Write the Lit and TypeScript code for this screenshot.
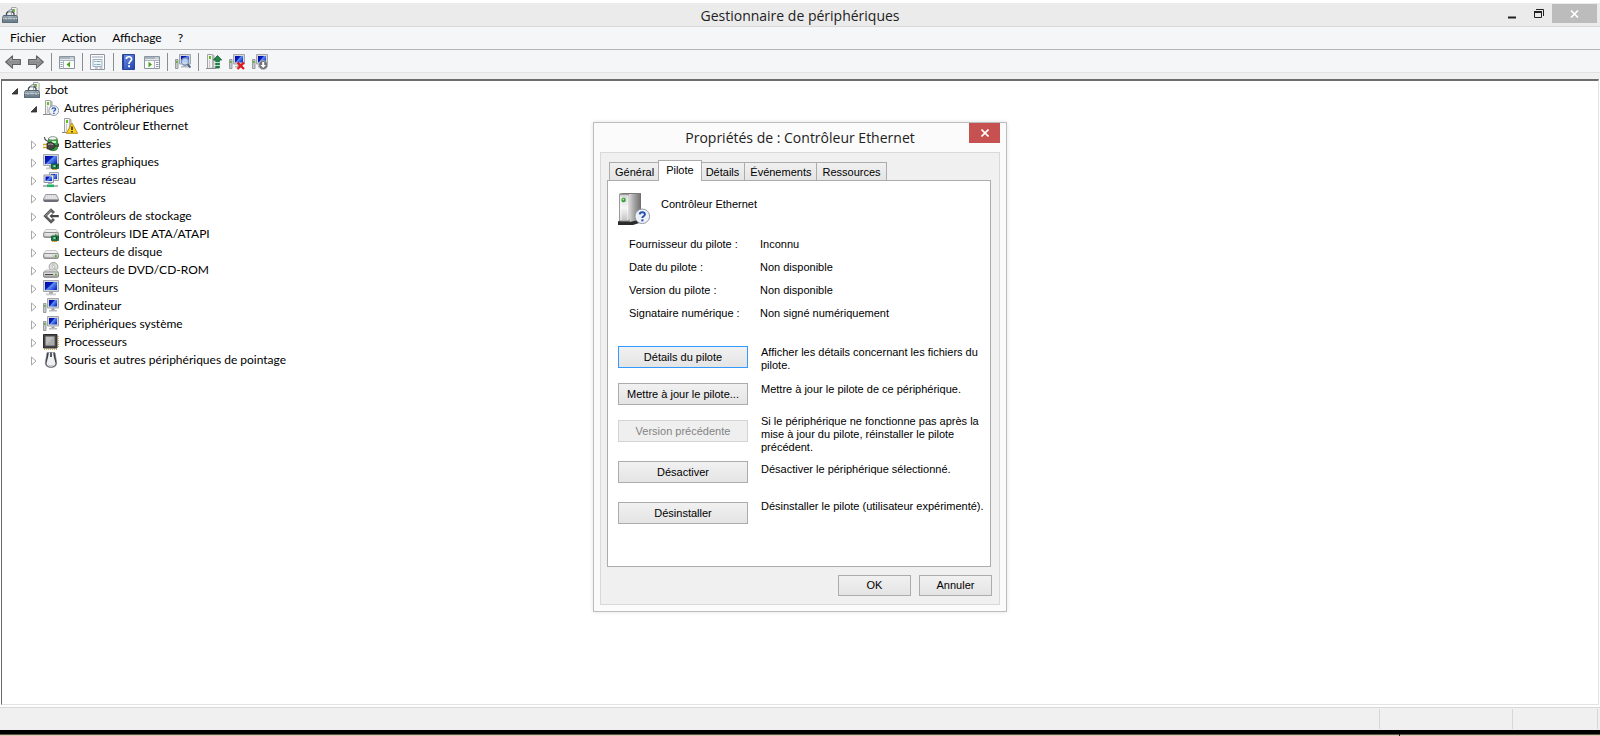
import { LitElement, html, svg, css, nothing, SVGTemplateResult } from "lit";
import { customElement, state } from "lit/decorators.js";
import { classMap } from "lit/directives/class-map.js";

/* ---------- reusable pieces of artwork, on a 16 x 16 grid ---------- */

const gradients = svg`<defs>
  <linearGradient id="screen" x1="0" y1="0" x2="1" y2=".7">
    <stop offset="0" stop-color="#0208a0"/><stop offset=".45" stop-color="#0a1cc0"/>
    <stop offset=".55" stop-color="#5f8ff0"/><stop offset="1" stop-color="#1434d0"/>
  </linearGradient>
  <linearGradient id="metal" x1="0" y1="0" x2="0" y2="1">
    <stop offset="0" stop-color="#f4f4f4"/><stop offset="1" stop-color="#9c9c9c"/>
  </linearGradient>
  <linearGradient id="arrow" x1="0" y1="0" x2="0" y2="1">
    <stop offset="0" stop-color="#c4c4c4"/><stop offset=".5" stop-color="#8b8b8b"/><stop offset="1" stop-color="#a8a8a8"/>
  </linearGradient>
  <linearGradient id="case" x1="0" y1="0" x2="0" y2="1">
    <stop offset="0" stop-color="#a9b8c2"/><stop offset="1" stop-color="#5f7482"/>
  </linearGradient>
  <linearGradient id="help" x1="0" y1="0" x2="1" y2="1">
    <stop offset="0" stop-color="#6f95e8"/><stop offset="1" stop-color="#1f3fae"/>
  </linearGradient>
  <linearGradient id="steel" x1="0" y1="0" x2="1" y2="0">
    <stop offset="0" stop-color="#d9d9d9"/><stop offset=".4" stop-color="#a8a8a8"/><stop offset="1" stop-color="#6e6e6e"/>
  </linearGradient>
  <linearGradient id="face" x1="0" y1="0" x2="0" y2="1">
    <stop offset="0" stop-color="#d0d0d0"/><stop offset=".5" stop-color="#f6f6f6"/><stop offset="1" stop-color="#c2c2c2"/>
  </linearGradient>
</defs>`;

const question = (cx: number, cy: number, r: number) => svg`
  <circle cx=${cx} cy=${cy} r=${r} fill="#eef2f7" stroke="#8a929e" stroke-width=".9"/>
  <g transform="translate(${cx} ${cy}) scale(${r / 4.5})">
    <path d="M-1.600 -1.200C-1.500 -3 1.700 -3 1.600 -1.100C1.500 0 0 0 0 1.100" fill="none" stroke="#2450b4" stroke-width="1.200"/>
    <rect x="-.6" y="1.900" width="1.300" height="1.200" fill="#2450b4"/>
  </g>`;

const tower = svg`
  <path d="M2.500 .5h5l1 .8v13h-6z" fill="#f2f2f2" stroke="#a3a3a3"/>
  <path d="M7 .6l2.600 .9v12.800H7z" fill="#b5b5b5"/>
  <rect x="4" y="2" width="2" height="3" fill="#62c024"/>
  <path d="M4.500 6v7" stroke="#c8c8c8"/>
  <path d="M0 14.500h11" stroke="#8b8b8b"/>`;

const toolbox = svg`
  <path d="M9.500 .5h4.700l.9 1v9h-5.600z" fill="#f3f3f3" stroke="#a5a5a5"/>
  <rect x="11" y="2" width="2" height="3" fill="#74c63a"/>
  <path d="M4.500 8V6.200L6 4.700h4.400L12 6.200V8" fill="none" stroke="#3f4a52" stroke-width="1.300"/>
  <path d="M5.500 4.500L8.500 2.500h3l-2 2.200" fill="#cfd6da" stroke="#59666f" stroke-width=".6"/>
  <path d="M1.500 8.500h13l1 2.200v5H.5v-5z" fill="url(#case)" stroke="#526571"/>
  <path d="M.6 11.500h14.800" stroke="#c3d0d8" stroke-width=".9"/>
  <path d="M3 10h2v3H3zM11 10h2v3h-2z" fill="#e3e9ec" stroke="#43535e" stroke-width=".5"/>`;

const monitor = svg`
  <path d="M.5 .5h15v11H.5z" fill="#d3d6da" stroke="#a4a8ae"/>
  <path d="M2 2h12v8H2z" fill="url(#screen)"/>
  <path d="M6 12h4v2H6z" fill="#a5a7aa"/><path d="M3 13.500h10v1.800H3z" fill="#c8cacc"/>`;

const pc = svg`
  <path d="M.5 5.500h2.500v9H.5z" fill="#c7cacd" stroke="#888c90" stroke-width=".8"/>
  <rect x="1" y="7" width="1.500" height="2" fill="#57b82a"/>
  <path d="M4.500 .5h11v9.500h-11z" fill="#d5d7da" stroke="#a2a6ab"/>
  <path d="M6 2h8v6.500H6z" fill="url(#screen)"/>
  <path d="M8.500 10.500h3V12h-3z" fill="#999"/><path d="M6 12h8v1.500H6z" fill="#b9bbbd"/>`;

const chipCard = svg`
  <path d="M8.500 10h7v4.500h-7z" fill="#1f7a4a" stroke="#0f4f2e" stroke-width=".8"/>
  <path d="M10.500 11.200h2v1.800h-2z" fill="#8fe0b0"/><path d="M13.500 11v2.500" stroke="#0b3c22"/>
  <path d="M9 15.500h5" stroke="#d9a437"/>`;

const disk = svg`
  <path d="M3 6.500h10L15.500 10H.5z" fill="#f1f1f1" stroke="#b1b1b1" stroke-width=".7"/>
  <rect x=".5" y="9.500" width="15" height="5" rx="1.600" fill="url(#metal)" stroke="#868686" stroke-width=".9"/>
  <path d="M2.500 12h7" stroke="#f6f6f6"/><rect x="12" y="10.800" width="1.600" height="2.400" fill="#4fb32a"/>`;

const consolePane = svg`
  <path d="M.5 2.500h15v12H.5z" fill="#fdfdfd" stroke="#8b95a0"/>
  <path d="M1 3h14v2.300H1z" fill="#a9b4be"/><path d="M11 4h3.500" stroke="#e7ecf0"/>
  <path d="M1 6.500h14" stroke="#a9b4be"/>`;

const icons: Record<string, SVGTemplateResult> = {
  toolbox,
  back: svg`<path d="M.7 8L7.500 1.800v3.700h7.900v5H7.500v3.700z" fill="url(#arrow)" stroke="#626262" stroke-width="1.100" stroke-linejoin="round"/>`,
  forward: svg`<path d="M15.300 8L8.500 1.800v3.700H.6v5h7.900v3.700z" fill="url(#arrow)" stroke="#626262" stroke-width="1.100" stroke-linejoin="round"/>`,
  treePane: svg`${consolePane}<path d="M4.500 7v7.500" stroke="#a9b4be"/><path d="M1.500 8.500h2M1.500 10.500h2M1.500 12.500h2" stroke="#8b95a0"/>
    <path d="M11 7.500v6L7.500 10.500z" fill="#4aa51c"/>`,
  actionPane: svg`${consolePane}<path d="M10.500 7v7.500" stroke="#a9b4be"/><path d="M12 8.500h2.500M12 10.500h2.500M12 12.500h2.500" stroke="#8b95a0"/>
    <path d="M4.500 7.500v6L8 10.500z" fill="#4aa51c"/>`,
  properties: svg`<path d="M.5 .5h14v15H.5z" fill="#fcfcfc" stroke="#8f98a2"/><path d="M2 2h11v2H2z" fill="#c9d0d7"/>
    <path d="M3 5.500h9v7H3z" fill="#eef5fa" stroke="#a3b0bb"/>
    <path d="M4.500 7.500h1M4.500 10.500h1" stroke="#2c86c0"/><path d="M6.500 7.500h4M6.500 10.500h4" stroke="#7fa6bf"/>
    <path d="M5 14h3M9.500 14h3" stroke="#8f98a2"/>`,
  help: svg`<path d="M1.500 .5h12v15h-12z" fill="url(#help)" stroke="#2a479c"/><path d="M2.500 1v14" stroke="#274296"/>
    <path d="M5.300 5C5.500 2 10.700 2 10.600 5.200C10.500 7.300 8 7.300 8 10" fill="none" stroke="#fff" stroke-width="1.700"/><path d="M7.100 11.300h1.900v1.900H7.100z" fill="#fff"/>`,
  scan: svg`${pc}<circle cx="10" cy="7.500" r="3.600" fill="#cfe4fb" fill-opacity=".8" stroke="#7590b8" stroke-width="1.100"/><path d="M12.600 10.200l2.800 3.400" stroke="#4d6288" stroke-width="2"/>`,
  update: svg`<g transform="translate(-1 0)">${tower}</g><path d="M11.500 1.500l4.200 4.500h-2.400v8H9.800V6H7.300z" fill="#1f8a4c" stroke="#0f5a30" stroke-width=".8"/><path d="M8 8.500h7M8 11.500h7" stroke="#e7f7ec" stroke-width=".8"/>`,
  uninstall: svg`${pc}<path d="M8.500 8.500l6.500 6.500M15 8.500L8.500 15" stroke="#e0161b" stroke-width="2.200"/>`,
  disable: svg`${pc}<circle cx="11.200" cy="11" r="4.500" fill="#6f7276" stroke="#b9bcbf" stroke-width=".8"/><path d="M10.200 8h2v3h1.800l-2.800 3-2.800-3h1.800z" fill="#fff"/>`,
  unknown: svg`${tower}${question(10.800, 10.600, 4.900)}`,
  warning: svg`${tower}<path d="M10 5l5.600 10.300H4.400z" fill="#fbd21b" stroke="#b78a06" stroke-width=".9" stroke-linejoin="round"/><path d="M10 8.500v3.500M10 13v1.500" stroke="#222" stroke-width="1.500"/>`,
  battery: svg`<path d="M5.500 2.500C6 .5 13.500 .5 14 2.500l.5 2v7.500c0 3.500-9 3.500-9 0z" fill="#35a43c" stroke="#1d6d26" stroke-width=".7"/>
    <ellipse cx="9.700" cy="2.300" rx="4" ry="1.600" fill="#f3f3f3" stroke="#8a8a8a" stroke-width=".6"/><path d="M9 5h4v2H9z" fill="#c9f3c4"/>
    <path d="M1.500 1c0 4 2 3 3.500 4.500" fill="none" stroke="#444" stroke-width="1.100"/>
    <path d="M0 8.500h4M0 11.500h4" stroke="#d9a520" stroke-width="1.300"/>
    <path d="M4 7c5-1.500 8 .5 8 3s-3 4.500-8 2.800z" fill="#474747" stroke="#202020" stroke-width=".7"/><path d="M5 8.500c2-.8 4-.6 5 .4" stroke="#aaa" fill="none"/>
    <path d="M12 10.200h3.300V7.500" stroke="#333" fill="none" stroke-width="1.200"/>`,
  display: svg`${monitor}${chipCard}`,
  network: svg`<path d="M6.500 .5h9v8h-9z" fill="#dfe3ea" stroke="#9ea5b0"/><path d="M8 2h6v5H8z" fill="url(#screen)"/>
    <path d="M1 3h9.500v7.500H1z" fill="#e4e7ec" stroke="#8d96a4"/><path d="M2.500 4.500h6.500V9H2.500z" fill="url(#screen)"/>
    <path d="M5 10.800h4V12H5z" fill="#a9adb3"/><path d="M0 14h15" stroke="#9aa5a0" stroke-width="1.600"/><path d="M4 12.500h7v2.600H4z" fill="#1fb563"/>`,
  keyboard: svg`<path d="M2.800 4.500h10.400l2.300 4.300v2H.5v-2z" fill="#d5d5d9" stroke="#84858c" stroke-width=".8" stroke-linejoin="round"/>
    <path d="M.8 9.400h14.400v1.900l-1 .6H1.800l-1-.6z" fill="#6c6d76"/><path d="M3.200 6h9.800M2.600 8h11" stroke="#fff" stroke-dasharray="1 1"/>`,
  storage: svg`<path d="M12 4L8 .3 .3 8 8 15.700 12 12l-2-2-2 2-4-4 4-4 2 2z" fill="#5c5c5c"/>
    <path d="M8 2.200L2.200 8" stroke="#a2a2a2" stroke-width=".8"/>
    <path d="M6.500 8l3-2.600V7h6.300v2.200H9.500v1.500z" fill="#454545"/>`,
  ide: svg`<g transform="translate(0 -3)">${disk}</g>${chipCard}`,
  disk,
  optical: svg`<circle cx="10.500" cy="4.800" r="4.400" fill="#dedede" stroke="#909090" stroke-width=".8"/><path d="M10.500 4.800L8 1.300l4-.6zM10.500 4.800l3.700 2.500-3 1.700z" fill="#b5d6b0"/><circle cx="10.500" cy="4.800" r="1.300" fill="#fff" stroke="#999" stroke-width=".6"/>
    <path d="M3 8h10l2.500 2.200H.5z" fill="#efefef" stroke="#a4a4a4" stroke-width=".7"/>
    <rect x=".5" y="10" width="15" height="5.300" rx="1.200" fill="url(#metal)" stroke="#7d7d7d" stroke-width=".9"/><path d="M2 12.500h8" stroke="#474747"/><rect x="12" y="11.600" width="1.800" height="1.800" fill="#4fb32a"/>`,
  monitor,
  pc,
  cpu: svg`<path d="M.5 .5h13.500v13.500H.5z" fill="#454545" stroke="#2c2c2c"/><path d="M2.500 2.500h9v9h-9z" fill="#bdbdbd"/><path d="M2.500 11.500h9v-9z" fill="#9a9a9a" opacity=".5"/>
    <path d="M15.300 2v12" stroke="#c99b2c" stroke-dasharray="1 1"/><path d="M1 15.300h14" stroke="#c99b2c" stroke-dasharray="1 1"/>`,
  mouse: svg`<path d="M4 .7C5.500 0 10.500 0 12 .7l1.700 10c.5 6.500-11.900 6.500-11.400 0z" fill="#3a3e46" stroke="#7b7f86" stroke-width=".6"/>
    <path d="M5.800 .5h4.400C10.500 5 11.800 8 12.500 11c.5 5-9.500 5-9 0C4.200 8 5.500 5 5.800 .5z" fill="#f0f0f0"/>
    <path d="M7 .5h2v4.500H7z" fill="#555b64"/><path d="M5.500 13c1.500 1.200 3.500 1.200 5 0" fill="none" stroke="#b9bcc2"/>`,
};

@customElement("app-root")
export class AppRoot extends LitElement {
  @state() private closed = new Set<string>();
  @state() private tab = "Pilote";

  static styles = css`
    :host {
      display: block;
      --ui: Lato, "Open Sans", sans-serif;
      --title: "Open Sans", "Noto Sans", sans-serif;
      --dlg: "Liberation Sans", Arial, sans-serif;
      color: #000;
      font: 12px/18px var(--ui);
    }
    button { font: inherit; color: inherit; margin: 0; padding: 0; border: 0; background: none; }
    ul, dl, dd, h1, h2, p { margin: 0; padding: 0; list-style: none; font-weight: normal; }
    svg { display: block; flex: none; }
    .defs { position: absolute; width: 0; height: 0; }

    .desktop { position: relative; display: flex; flex-direction: column; height: 100vh; overflow: hidden; background: #000; }
    .window { flex: 1; display: flex; flex-direction: column; min-height: 0; padding-top: 3px; background: #fff; }
    .titlebar { display: grid; grid-template-columns: 1fr auto 1fr; height: 23px; background: #ebebeb; border-bottom: 1px solid #dadada; }
    .titlebar .mark { padding: 4px 0 0 2px; }
    .titlebar h1, .dialog h2 { font: 14px/20px var(--title); color: #222; }
    .titlebar h1 { padding-top: 3px; }
    .controls { display: flex; justify-content: flex-end; align-items: flex-start; padding-right: 3px; }
    .controls button { width: 27px; height: 20px; display: grid; place-items: center; margin-top: 1px; }
    .controls .shut { width: 45px; height: 19px; background: #bcbcbc; }
    .menubar { display: flex; gap: 16px; height: 22px; padding: 0 10px; background: #f5f6f7; border-bottom: 1px solid #b2b4b6; }
    .menubar button { line-height: 22px; }
    .toolbar { display: flex; align-items: flex-end; height: 22px; padding-left: 1px; background: #f5f6f7; border-bottom: 1px solid #e2e2e2; }
    .toolbar button { width: 23px; height: 20px; display: grid; place-items: center; }
    .toolbar i { width: 1px; height: 18px; margin: 0 3px 1px 4px; background: #8d8d8d; }
    .client { flex: 1; min-height: 0; padding: 6px 1px 2px 1px; background: linear-gradient(#f0f0f0 0 6px, #fff 6px); }
    .tree { height: 100%; box-sizing: border-box; background: #fff; border: 1px solid #e3e3e3; border-top: 2px solid #6f6b6f; border-left: 1px solid #696969; }
    .row { display: flex; align-items: center; height: 18px; }
    .row svg { margin-right: 5px; }
    .twisty { width: 16px; height: 18px; padding-top: 2px; display: grid; place-items: center; margin-right: 1px; }
    .row .twisty svg { margin: 0; }
    .tree > li > .row { padding-left: 5px; }
    .tree > li > ul > li > .row { padding-left: 24px; }
    .leaf { padding-left: 60px; }
    .status { display: flex; height: 22px; padding-right: 2px; background: #f0f0f0; border-top: 1px solid #d7d7d7; }
    .status span { box-sizing: border-box; width: 85px; margin: 1px 0; border-right: 1px solid #d7d7d7; }
    .status span:first-child { flex: 1; }
    .status span:nth-child(2) { width: 133px; }
    .edge { display: flex; gap: 1px; margin-top: 4px; height: 2px; background: #1d160c; }
    .edge b { flex: 1; background: linear-gradient(#5d5245 50%, #d8cab4 50%); }
    .edge b:first-child { flex: 7; }

    .dialog { position: absolute; top: 122px; left: 0; right: 0; margin: 0 auto; width: 414px; box-sizing: border-box; padding: 0 6px 6px; background: #fbfbfb; border: 1px solid #bdbdbd; box-shadow: 0 0 4px rgba(0, 0, 0, .12); font: 11px/13px var(--dlg); }
    .caption { display: grid; grid-template-columns: 31px 1fr 31px; height: 29px; }
    .caption h2 { text-align: center; padding-top: 5px; }
    .caption button { height: 20px; background: #c75050; display: grid; place-items: center; }
    .body { background: #f0f0f0; border: 1px solid #d9d9d9; padding: 7px 7px 8px 6px; }
    .tabs { display: flex; align-items: flex-end; padding-left: 3px; height: 20px; }
    .tabs button { height: 18px; padding: 1px 5px 0; margin-left: -1px; border: 1px solid #acacac; border-bottom: 0; background: linear-gradient(#f0f0f0, #e5e5e5); white-space: nowrap; }
    .tabs button.on { position: relative; height: 21px; margin: 0 -1px -1px -2px; padding: 0 7px 2px; background: #fff; z-index: 1; }
    .pane { box-sizing: border-box; min-height: 387px; margin-right: 1px; padding: 12px 0 12px 10px; background: #fff; border: 1px solid #acacac; }
    .who { display: flex; gap: 11px; height: 36px; }
    .who span { padding-top: 5px; }
    .facts { display: grid; grid-template-columns: 131px 1fr; row-gap: 10px; padding: 9px 0 0 11px; }
    .acts { display: grid; grid-template-columns: 130px 1fr; column-gap: 13px; margin-top: 26px; grid-template-rows: 37px 37px 41px 41px 22px; }
    .acts p { padding-right: 8px; }
    .push { box-sizing: border-box; height: 22px; padding: 0 8px; border: 1px solid #acacac; background: linear-gradient(#f1f1f1, #e4e4e4); }
    .push.focus { border-color: #3399ff; }
    .push:disabled { border-color: #d4d4d4; background: #efefef; color: #838383; }
    .acts p.up { margin-top: -5px; }
    .acts p.near { margin-top: 2px; padding: 0; }
    .acts p.high { margin-top: -2px; padding: 0; }
    .answer { display: flex; justify-content: flex-end; gap: 8px; margin-top: 8px; }
    .answer button { width: 73px; height: 21px; }
  `;

  private icon(name: string) {
    return html`<svg width="16" height="16" viewBox="0 0 16 16" aria-hidden="true">${icons[name]}</svg>`;
  }

  private toggle(name: string) {
    const next = new Set(this.closed);
    next.has(name) ? next.delete(name) : next.add(name);
    this.closed = next;
  }

  private twisty(name: string, open: boolean) {
    return html`<button class="twisty" aria-label=${name} aria-expanded=${open} @click=${() => this.toggle(name)}>
      <svg width="8" height="10" viewBox="0 0 8 10">${open
        ? svg`<path d="M6.500 2.500v5.500H1z" fill="#404040" stroke="#262626" stroke-width=".8"/>`
        : svg`<path d="M1.500 1v8L6 5z" fill="#fff" stroke="#a6a6a6"/>`}</svg>
    </button>`;
  }

  private branch(icon: string, name: string, child?: [string, string]) {
    const open = !!child && !this.closed.has(name);
    return html`<li>
      <div class="row">${this.twisty(name, open)}${this.icon(icon)}<span>${name}</span></div>
      ${open ? html`<ul><li class="row leaf">${this.icon(child![0])}<span>${child![1]}</span></li></ul>` : nothing}
    </li>`;
  }

  private tool(icon: string, label: string) {
    return html`<button aria-label=${label}>${this.icon(icon)}</button>`;
  }

  private renderTree() {
    const root = "zbot";
    const open = !this.closed.has(root);
    return html`<ul class="tree"><li>
      <div class="row">${this.twisty(root, open)}${this.icon("toolbox")}<span>${root}</span></div>
      ${open ? html`<ul>
        ${this.branch("unknown", "Autres périphériques", ["warning", "Contrôleur Ethernet"])}
        ${this.branch("battery", "Batteries")}
        ${this.branch("display", "Cartes graphiques")}
        ${this.branch("network", "Cartes réseau")}
        ${this.branch("keyboard", "Claviers")}
        ${this.branch("storage", "Contrôleurs de stockage")}
        ${this.branch("ide", "Contrôleurs IDE ATA/ATAPI")}
        ${this.branch("disk", "Lecteurs de disque")}
        ${this.branch("optical", "Lecteurs de DVD/CD-ROM")}
        ${this.branch("monitor", "Moniteurs")}
        ${this.branch("pc", "Ordinateur")}
        ${this.branch("pc", "Périphériques système")}
        ${this.branch("cpu", "Processeurs")}
        ${this.branch("mouse", "Souris et autres périphériques de pointage")}
      </ul>` : nothing}
    </li></ul>`;
  }

  private renderDialog() {
    const tabs = ["Général", "Pilote", "Détails", "Événements", "Ressources"];
    return html`<section class="dialog" role="dialog" aria-labelledby="dlg-title">
      <header class="caption">
        <span></span>
        <h2 id="dlg-title">Propriétés de : Contrôleur Ethernet</h2>
        <button aria-label="Fermer"><svg width="8" height="8" viewBox="0 0 8 8"><path d="M.5 .5l7 7M7.500 .5l-7 7" stroke="#fff" stroke-width="1.600"/></svg></button>
      </header>
      <div class="body">
        <div class="tabs" role="tablist">
          ${tabs.map(t => html`<button role="tab" class=${classMap({ on: t === this.tab })} aria-selected=${t === this.tab} @click=${() => (this.tab = t)}>${t}</button>`)}
        </div>
        <div class="pane" role="tabpanel">
          <div class="who">
            <svg width="32" height="32" viewBox="0 0 32 32" aria-hidden="true">
              <path d="M0 28.500l3-2h20v3l-8 2.500H0z" fill="#2b2b2b"/>
              <path d="M1.500 1.500h9.500v26.500H1.500z" fill="url(#face)" stroke="#9a9a9a"/>
              <path d="M11 1.500L14 .5h9v26L11.500 29z" fill="url(#steel)"/>
              <path d="M1.500 1L5 .5h18" fill="none" stroke="#7a7a7a"/>
              <path d="M3 3v24M10 3v24" stroke="#fff" stroke-width=".8"/>
              <circle cx="5.500" cy="7" r="2.200" fill="#2f9a2f"/><circle cx="5.300" cy="6.500" r=".9" fill="#a9f088"/>
              ${question(24.300, 23.300, 7.300)}
            </svg>
            <span>Contrôleur Ethernet</span>
          </div>
          <dl class="facts">
            <dt>Fournisseur du pilote :</dt><dd>Inconnu</dd>
            <dt>Date du pilote :</dt><dd>Non disponible</dd>
            <dt>Version du pilote :</dt><dd>Non disponible</dd>
            <dt>Signataire numérique :</dt><dd>Non signé numériquement</dd>
          </dl>
          <div class="acts">
            <button class="push focus" aria-describedby="d1">Détails du pilote</button><p id="d1">Afficher les détails concernant les fichiers du pilote.</p>
            <button class="push" aria-describedby="d2">Mettre à jour le pilote...</button><p id="d2">Mettre à jour le pilote de ce périphérique.</p>
            <button class="push" disabled aria-describedby="d3">Version précédente</button><p id="d3" class="up">Si le périphérique ne fonctionne pas après la mise à jour du pilote, réinstaller le pilote précédent.</p>
            <button class="push" aria-describedby="d4">Désactiver</button><p id="d4" class="near">Désactiver le périphérique sélectionné.</p>
            <button class="push" aria-describedby="d5">Désinstaller</button><p id="d5" class="high">Désinstaller le pilote (utilisateur expérimenté).</p>
          </div>
        </div>
        <div class="answer"><button class="push">OK</button><button class="push">Annuler</button></div>
      </div>
    </section>`;
  }

  render() {
    return html`
      <svg class="defs" aria-hidden="true">${gradients}</svg>
      <div class="desktop">
        <main class="window">
          <header class="titlebar">
            <div class="mark">${this.icon("toolbox")}</div>
            <h1>Gestionnaire de périphériques</h1>
            <div class="controls">
              <button aria-label="Réduire"><svg width="8" height="12" viewBox="0 0 8 12"><path d="M0 8.500h8v2H0z" fill="#222"/></svg></button>
              <button aria-label="Restaurer"><svg width="10" height="12" viewBox="0 0 10 12"><path d="M.5 3.500h7v6h-7z" fill="none" stroke="#222"/><path d="M0 3h8v2H0z" fill="#222"/><path d="M2 1.500h7.500V8" fill="none" stroke="#222"/></svg></button>
              <button class="shut" aria-label="Fermer"><svg width="9" height="8" viewBox="0 0 9 8"><path d="M1 .5l7 7M8 .5l-7 7" stroke="#fff" stroke-width="1.600"/></svg></button>
            </div>
          </header>
          <nav class="menubar">
            <button>Fichier</button><button>Action</button><button>Affichage</button><button>?</button>
          </nav>
          <div class="toolbar">
            ${this.tool("back", "Précédent")}${this.tool("forward", "Suivant")}<i></i>
            ${this.tool("treePane", "Arborescence")}<i></i>
            ${this.tool("properties", "Propriétés")}<i></i>
            ${this.tool("help", "Aide")}${this.tool("actionPane", "Volet Actions")}<i></i>
            ${this.tool("scan", "Rechercher")}<i></i>
            ${this.tool("update", "Mettre à jour")}${this.tool("uninstall", "Désinstaller")}${this.tool("disable", "Désactiver")}
          </div>
          <div class="client">${this.renderTree()}</div>
          <footer class="status"><span></span><span></span><span></span></footer>
        </main>
        <div class="edge"><b></b><b></b></div>
        ${this.renderDialog()}
      </div>`;
  }
}
